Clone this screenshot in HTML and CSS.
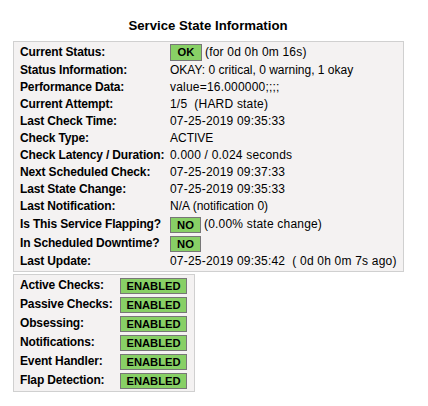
FILE: index.html
```html
<!DOCTYPE html>
<html>
<head>
<meta charset="utf-8">
<link rel="stylesheet" href="styles.css">
</head>
<body>
<div class="wrap">
  <div class="title">Service State Information</div>
  <div class="box info">
    <div class="var badge-row">Current Status:</div>
    <div class="val badge-row"><span class="badge b-ok">OK</span><span class="after num">(for 0d 0h 0m 16s)</span></div>
    <div class="var">Status Information:</div>
    <div class="val">OKAY: 0 critical, 0 warning, 1 okay</div>
    <div class="var">Performance Data:</div>
    <div class="val num">value=16.000000;;;;</div>
    <div class="var">Current Attempt:</div>
    <div class="val num">1/5&nbsp; (HARD state)</div>
    <div class="var">Last Check Time:</div>
    <div class="val num">07-25-2019 09:35:33</div>
    <div class="var">Check Type:</div>
    <div class="val">ACTIVE</div>
    <div class="var">Check Latency / Duration:</div>
    <div class="val num">0.000 / 0.024 seconds</div>
    <div class="var">Next Scheduled Check:</div>
    <div class="val num">07-25-2019 09:37:33</div>
    <div class="var">Last State Change:</div>
    <div class="val num">07-25-2019 09:35:33</div>
    <div class="var">Last Notification:</div>
    <div class="val">N/A (notification 0)</div>
    <div class="var badge-row">Is This Service Flapping?</div>
    <div class="val badge-row"><span class="badge b-no">NO</span><span class="after num">(0.00% state change)</span></div>
    <div class="var badge-row">In Scheduled Downtime?</div>
    <div class="val badge-row"><span class="badge b-no">NO</span></div>
    <div class="var">Last Update:</div>
    <div class="val num">07-25-2019 09:35:42&nbsp; ( 0d 0h 0m 7s ago)</div>
  </div>
  <div class="box flags">
    <div class="var badge-row">Active Checks:</div>
    <div class="val badge-row"><span class="badge b-en">ENABLED</span></div>
    <div class="var badge-row">Passive Checks:</div>
    <div class="val badge-row"><span class="badge b-en">ENABLED</span></div>
    <div class="var badge-row">Obsessing:</div>
    <div class="val badge-row"><span class="badge b-en">ENABLED</span></div>
    <div class="var badge-row">Notifications:</div>
    <div class="val badge-row"><span class="badge b-en">ENABLED</span></div>
    <div class="var badge-row">Event Handler:</div>
    <div class="val badge-row"><span class="badge b-en">ENABLED</span></div>
    <div class="var badge-row">Flap Detection:</div>
    <div class="val badge-row"><span class="badge b-en">ENABLED</span></div>
  </div>
</div>
</body>
</html>
```
FILE: styles.css
```css
html, body {
  margin: 0;
  padding: 0;
  background: #ffffff;
}
body {
  font-family: "Liberation Sans", Arial, sans-serif;
  font-size: 12px;
  color: #000000;
}
.wrap {
  display: inline-flex;
  flex-direction: column;
  align-items: flex-start;
  margin: 18px 0 0 13px;
  width: 390px;
}
.title {
  align-self: stretch;
  text-align: center;
  font-weight: bold;
  font-size: 13.2px;
  line-height: 16px;
  height: 16px;
  margin-bottom: 7px;
}
.box {
  display: grid;
  background: #f4f2f2;
  border: 1px solid #d0d0d0;
  padding: 1px 0 1px 6px;
  align-items: center;
}
.info {
  width: 383px;
  grid-template-columns: 150px 1fr;
}
.flags {
  margin-top: 2px;
  width: 174px;
  grid-template-columns: 100px 1fr;
}
.var {
  font-weight: bold;
  letter-spacing: -0.15px;
  line-height: 17px;
  height: 17px;
  white-space: nowrap;
}
.val {
  line-height: 17px;
  height: 17px;
  white-space: nowrap;
  display: flex;
  align-items: center;
}
.num {
  letter-spacing: 0.2px;
}
.badge-row {
  height: 19px;
  line-height: 19px;
}
.badge {
  display: inline-block;
  box-sizing: border-box;
  background: #88d066;
  border: 1px solid #777777;
  font-weight: bold;
  font-size: 11.2px;
  text-align: center;
  height: 17px;
  line-height: 15px;
}
.b-ok { width: 32px; }
.b-no { width: 31px; height: 16px; line-height: 14px; }
.b-en { width: 67px; height: 16px; line-height: 14px; }
.after {
  margin-left: 3px;
}
```
